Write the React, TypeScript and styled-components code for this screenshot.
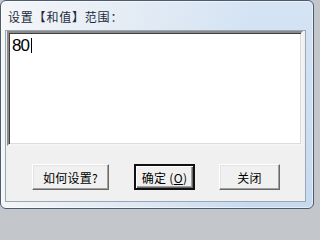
import React from 'react';
import styled, { createGlobalStyle } from 'styled-components';

const GlobalStyle = createGlobalStyle`
  html, body {
    margin: 0;
    padding: 0;
    background: #c3c7cc;
    width: 316px;
    height: 212px;
    overflow: hidden;
  }
  * {
    box-sizing: border-box;
  }
`;

const cjk = `"Noto Sans CJK SC", "Liberation Sans", sans-serif`;

const Window = styled.div`
  width: 314px;
  height: 209px;
  border: 1px solid #4d5b6f;
  border-radius: 6px;
  background:
    linear-gradient(to right, rgba(246, 247, 248, 0.95) 0%, rgba(236, 240, 245, 0.6) 45%, rgba(214, 228, 243, 0) 80%),
    linear-gradient(to bottom, #d5e4f4 0%, #c6daef 100%);
  box-shadow: inset 0 0 0 1px rgba(255, 255, 255, 0.55);
  display: flex;
  flex-direction: column;
  padding: 0 7px 6px 4px;
`;

const TitleBar = styled.div`
  height: 29px;
  display: flex;
  align-items: center;
  padding-left: 3px;
  padding-top: 2px;
  font-family: ${cjk};
  font-size: 12px;
  color: #1b2a40;
  letter-spacing: 0.8px;
`;

const Client = styled.div`
  flex: 1;
  background: #f0f0f0;
  border: 1px solid #9aa7b6;
  display: flex;
  flex-direction: column;
`;

const TextBox = styled.div`
  height: 115px;
  margin: 0 2px 0 1px;
  background: #fff;
  border-style: solid;
  border-width: 2px;
  border-color: #8a8a8a #f4f4f4 #f4f4f4 #8a8a8a;
  box-shadow: inset 1px 1px 0 #3f3f3f, inset -1px -1px 0 #dcdcdc;
  padding: 3px 3px;
  font-family: "Liberation Sans", Arial, sans-serif;
  font-size: 17px;
  line-height: 19px;
  color: #000;
  display: flex;
  align-items: flex-start;
`;

const Value = styled.span`
  letter-spacing: -1px;
`;

const Caret = styled.span`
  display: inline-block;
  width: 1px;
  height: 15px;
  margin: 2px 0 0 2px;
  background: #000;
`;

const ButtonRow = styled.div`
  display: flex;
  align-items: center;
  padding-left: 26px;
  margin-top: 18px;
`;

const Button = styled.button<{ $width: number; $default?: boolean; $gap?: number }>`
  width: ${p => p.$width}px;
  height: 26px;
  margin-right: ${p => p.$gap ?? 0}px;
  padding: 0;
  background: #f0f0f0;
  font-family: ${cjk};
  font-size: 12px;
  color: #000;
  border-style: solid;
  border-width: ${p => (p.$default ? '2px' : '1px')};
  border-color: ${p => (p.$default ? '#111' : '#fff #696969 #696969 #fff')};
  box-shadow: ${p =>
    p.$default
      ? 'inset 1px 1px 0 #fff, inset -1px -1px 0 #696969, inset -2px -2px 0 #a0a0a0'
      : 'inset -1px -1px 0 #a0a0a0, inset 1px 1px 0 #e3e3e3'};
  display: flex;
  align-items: center;
  justify-content: center;
  letter-spacing: 0.3px;

  u {
    text-decoration-thickness: 1px;
    text-underline-offset: 1px;
  }
`;

export default function App() {
  return (
    <>
      <GlobalStyle />
      <Window>
        <TitleBar>设置【和值】范围：</TitleBar>
        <Client>
          <TextBox>
            <Value>80</Value>
            <Caret />
          </TextBox>
          <ButtonRow>
            <Button $width={77} $gap={25}>如何设置?</Button>
            <Button $width={61} $gap={24} $default>
              确定 (<u>O</u>)
            </Button>
            <Button $width={61}>关闭</Button>
          </ButtonRow>
        </Client>
      </Window>
    </>
  );
}
